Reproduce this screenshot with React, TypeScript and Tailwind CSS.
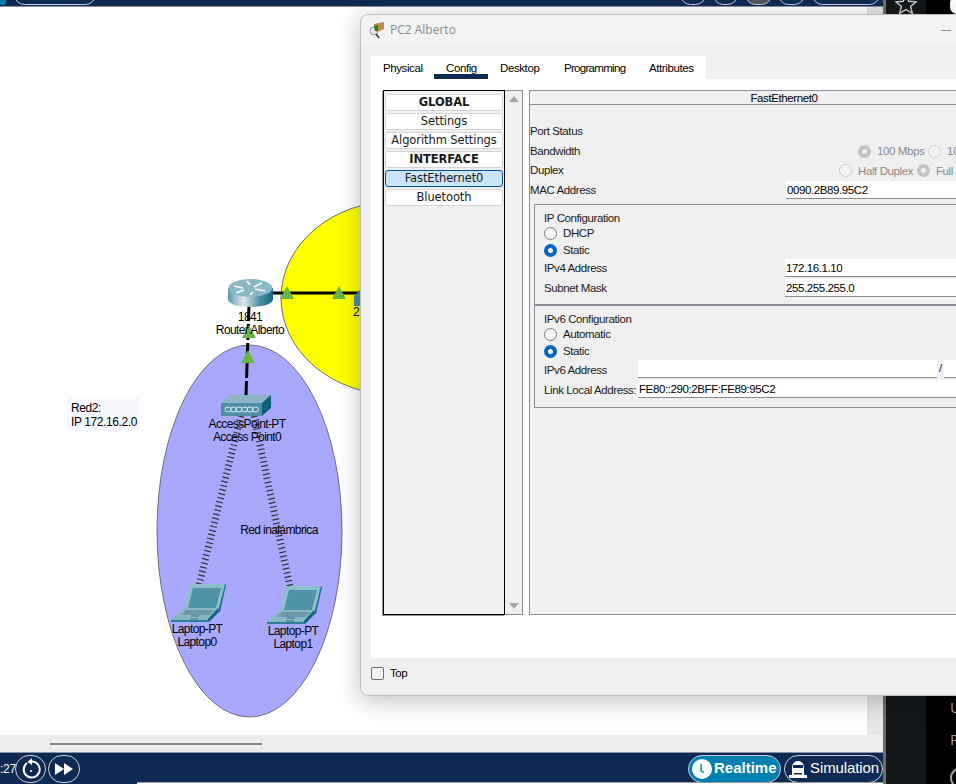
import React from 'react';

const Radio = ({ checked = false, disabled = false }: { checked?: boolean; disabled?: boolean }) => {
  if (checked && disabled) {
    return (
      <span className="flex h-[13px] w-[13px] shrink-0 items-center justify-center rounded-full bg-[#c4c4c4]">
        <span className="h-[5px] w-[5px] rounded-full bg-[#f0f0f0]" />
      </span>
    );
  }
  if (checked) {
    return (
      <span className="flex h-[13px] w-[13px] shrink-0 items-center justify-center rounded-full bg-[#0067c0]">
        <span className="h-[5px] w-[5px] rounded-full bg-white" />
      </span>
    );
  }
  return (
    <span className={disabled
      ? 'h-[13px] w-[13px] shrink-0 rounded-full border border-[#cccccc] bg-[#f4f4f4]'
      : 'h-[13px] w-[13px] shrink-0 rounded-full border border-[#7a7a7a] bg-[#f4f4f4]'} />
  );
};

const Label = ({ text, className = '' }: { text: string; className?: string }) => (
  <span className={`mt-[2px] whitespace-nowrap ${className}`}>{text}</span>
);

const Field = ({ value, className }: { value?: string; className: string }) => (
  <div className={`h-[18px] border-b border-[#8a8a8a] bg-white pl-px leading-[19px] text-black ${className}`}>{value}</div>
);

const MenuItem = ({ label, bold = false, selected = false }: { label: string; bold?: boolean; selected?: boolean }) => (
  <div className={`flex h-[17px] items-center justify-center rounded-[3px] border pt-px font-['DejaVu_Sans',sans-serif] text-[11.500px] tracking-[-0.1px] ${
    selected ? 'border-[#005499] bg-[#cce4f7]' : 'border-[#d4d4d4] bg-white'
  } ${bold ? 'font-bold' : ''}`}>{label}</div>
);

const Triangle = ({ x, y }: { x: number; y: number }) => (
  <polygon points={`${x},${y} ${x + 7},${y + 13} ${x - 7},${y + 13}`} fill="#6ab547" />
);

const Laptop = ({ x, y }: { x: number; y: number }) => (
  <g transform={`translate(${x} ${y})`}>
    <polygon points="19,0 54,0 47,26 47,28 12,28" fill="#8fc0c9" />
    <polygon points="54,0 55,1 49,28 47,28" fill="#14708c" />
    <polygon points="22,4 50,4 45,24 17,24" fill="#4f93a8" />
    <polygon points="14,24 47,24 36,36 0,36" fill="#8ab8c2" />
    <polygon points="15,26 44,26 38,31 10,31" fill="#6a9aa6" />
    <polygon points="47,24 48,28 38,38 36,36" fill="#10657f" />
    <polygon points="0,36 36,36 38,38 0,38" fill="#2b8099" />
    <path d="M20 32h8M19 35h8" stroke="#35707f" strokeWidth="1" />
  </g>
);

const Diagram = () => (
  <svg className="absolute left-0 top-0" width="883" height="784">
    <defs>
      <linearGradient id="routerSide" x1="0" x2="1" y1="0" y2="0">
        <stop offset="0" stopColor="#5a98ad" />
        <stop offset="0.35" stopColor="#dcecf1" />
        <stop offset="0.7" stopColor="#4d8fa5" />
        <stop offset="1" stopColor="#15677f" />
      </linearGradient>
    </defs>
    <ellipse cx="396" cy="298" rx="115" ry="97" fill="#ffff00" stroke="#6e6e6e" />
    <ellipse cx="249.500" cy="531" rx="92.500" ry="186" fill="#a8a8ff" stroke="#6e6e80" />

    <line x1="270" y1="293" x2="362" y2="293" stroke="#000" strokeWidth="3" />
    <line x1="249" y1="305" x2="246" y2="396" stroke="#000" strokeWidth="3" strokeDasharray="16 3" />
    <line x1="241" y1="416" x2="199" y2="585" stroke="#333" strokeWidth="7" strokeDasharray="1.200 3" />
    <line x1="254" y1="416" x2="290" y2="587" stroke="#333" strokeWidth="7" strokeDasharray="1.200 3" />

    <Triangle x={287} y={286} />
    <Triangle x={339} y={286} />
    <Triangle x={249} y={325} />
    <Triangle x={248} y={350} />

    {/* router */}
    <path d="M228 288v11c0 5 10 8 22.500 8s22.500-3 22.500-8v-11z" fill="url(#routerSide)" />
    <ellipse cx="250.500" cy="288" rx="22" ry="9" fill="#8cb7c7" />
    <path d="M234 286l9 2M236 293l8-3M262 283l-8 4M265 291l-10-2M247 281l3 4M253 292l-3 3" stroke="#fff" strokeWidth="1.500" />

    {/* access point */}
    <polygon points="221,403 229,395 271,395 262,403" fill="#8db5c3" />
    <polygon points="262,403 271,395 271,408 262,416" fill="#0f6079" />
    <rect x="221" y="403" width="41" height="13" fill="#4f8fa6" />
    <g fill="none" stroke="#d8eef3" strokeWidth="1">
      <ellipse cx="228" cy="409.500" rx="3" ry="2.500" />
      <ellipse cx="233.500" cy="409.500" rx="3" ry="2.500" />
      <ellipse cx="239" cy="409.500" rx="3" ry="2.500" />
      <ellipse cx="244.500" cy="409.500" rx="3" ry="2.500" />
      <ellipse cx="250" cy="409.500" rx="3" ry="2.500" />
      <ellipse cx="255.500" cy="409.500" rx="3" ry="2.500" />
    </g>

    {/* switch cut off by the window */}
    <polygon points="354,296 360,290 362,290 362,306 354,306" fill="#4f8fa6" />

    <Laptop x={171} y={584} />
    <Laptop x={267} y={586} />
  </svg>
);

const NodeLabel = ({ lines, className }: { lines: string[]; className: string }) => (
  <div className={`absolute -translate-x-1/2 whitespace-nowrap text-center text-[12px] leading-[13px] tracking-[-0.6px] text-black ${className}`}>
    {lines.map((l) => <div key={l}>{l}</div>)}
  </div>
);

const Pill = ({ className }: { className: string }) => (
  <div className={`-mt-[16px] h-[21px] rounded-full border border-[#c8d0dc] ${className}`} />
);

const WindowIcon = () => (
  <svg width="17" height="17" viewBox="0 0 17 17">
    <circle cx="5" cy="9" r="4" fill="#e8e8e8" stroke="#9a9a9a" />
    <line x1="7" y1="12" x2="10" y2="16" stroke="#333" strokeWidth="1.500" />
    <polygon points="5,2 15,0 15,7 8,10 5,7" fill="#b98f4a" />
    <polygon points="5,4 9,3 9,9 6,9" fill="#2d7a34" />
  </svg>
);

const PanelWindow = () => (
  <div className="absolute left-[360px] top-[14px] flex h-[682px] w-[700px] flex-col rounded-[8px] border border-[#bdbdbd] bg-[#f0f0f0] font-['Liberation_Sans',sans-serif] text-[11.500px] tracking-[-0.4px] text-[#1a1a1a] shadow-[0_4px_24px_rgba(0,0,0,0.25)]">
    <div className="flex h-[30px] items-center rounded-t-[8px] bg-[#f3f3f3] pl-[8px] pr-[108px]">
      <WindowIcon />
      <span className="ml-[4px] font-['Open_Sans',sans-serif] text-[12px] tracking-normal text-[#8a8a8a]">PC2 Alberto</span>
      <span className="ml-auto h-px w-[10px] bg-[#8a8a8a]" />
    </div>

    <div className="ml-[10px] mt-[11px] flex h-[602px] flex-col bg-white">
      <div className="flex h-[23px] bg-[#f0f0f0]">
        <div className="relative flex w-[335px] bg-white pl-[12px] pt-[4px] text-black">
          <span className="w-[63px]">Physical</span>
          <span className="w-[54px]">Config</span>
          <span className="w-[64px]">Desktop</span>
          <span className="w-[85px] tracking-[-0.7px]">Programming</span>
          <span>Attributes</span>
          <span className="absolute left-[63px] top-[18px] h-[5px] w-[54px] bg-[#0f2a52]" />
        </div>
      </div>

      <div className="mt-[11px] flex h-[525px] pl-[12px]">
        <div className="flex w-[122px] flex-col gap-[2px] border border-black bg-[#f0f0f0] px-px pt-[3px] shadow-[-1px_1px_0_#8a8f99]">
          <MenuItem label="GLOBAL" bold />
          <MenuItem label="Settings" />
          <MenuItem label="Algorithm Settings" />
          <MenuItem label="INTERFACE" bold />
          <MenuItem label="FastEthernet0" selected />
          <MenuItem label="Bluetooth" />
        </div>
        <div className="flex w-[18px] flex-col items-center justify-between border-y border-r border-[#8a8f99] bg-[#f0f0f0] px-[3px] py-[5px]">
          <span className="h-0 w-0 border-x-[5px] border-b-[6px] border-x-transparent border-b-[#a6a6a6]" />
          <span className="h-0 w-0 border-x-[5px] border-t-[6px] border-x-transparent border-t-[#a6a6a6]" />
        </div>

        <div className="ml-[6px] flex w-[510px] flex-col border border-[#8a8f99] bg-[#f0f0f0]">
          <div className="h-[14px] border-b border-[#8a8f99] text-center leading-[14px] text-black">FastEthernet0</div>

          <div className="pt-[16px]">
            <div className="flex h-[20px] items-center"><Label text="Port Status" /></div>
            <div className="flex h-[20px] items-center">
              <Label text="Bandwidth" className="w-[328px]" />
              <Radio checked disabled />
              <Label text="100 Mbps" className="ml-[6px] w-[51px] text-[#8a8a8a]" />
              <Radio disabled />
              <Label text="10 Mbps" className="ml-[6px] text-[#8a8a8a]" />
            </div>
            <div className="flex h-[19px] items-center">
              <span className="w-[309px]">Duplex</span>
              <Radio disabled />
              <Label text="Half Duplex" className="ml-[6px] w-[59px] text-[#8a8a8a]" />
              <Radio checked disabled />
              <Label text="Full Duplex" className="ml-[6px] text-[#8a8a8a]" />
            </div>
            <div className="flex h-[20px] items-center">
              <Label text="MAC Address" className="w-[256px]" />
              <Field value="0090.2B89.95C2" className="w-[245px]" />
            </div>
          </div>

          <div className="ml-[4px] mt-[4px] w-[500px] border-x border-[#8a8f99]">
            <div className="h-[100px] border-t border-[#8a8f99] pl-[9px] pt-[5px]">
              <div className="flex h-[16px] items-center"><Label text="IP Configuration" /></div>
              <div className="mt-[-1px] flex h-[16px] items-center gap-[6px]"><Radio /><Label text="DHCP" /></div>
              <div className="mt-px flex h-[16px] items-center gap-[6px]"><Radio checked /><Label text="Static" /></div>
              <div className="mt-px flex h-[18px] items-center">
                <Label text="IPv4 Address" className="w-[241px]" />
                <Field value="172.16.1.10" className="w-[240px]" />
              </div>
              <div className="mt-[2px] flex h-[18px] items-center">
                <Label text="Subnet Mask" className="w-[241px]" />
                <Field value="255.255.255.0" className="w-[240px]" />
              </div>
            </div>
            <div className="h-[104px] border-b border-t-2 border-[#8a8f99] pl-[9px] pt-[5px]">
              <div className="flex h-[16px] items-center"><Label text="IPv6 Configuration" /></div>
              <div className="mt-[-1px] flex h-[16px] items-center gap-[6px]"><Radio /><Label text="Automatic" /></div>
              <div className="mt-px flex h-[16px] items-center gap-[6px]"><Radio checked /><Label text="Static" /></div>
              <div className="mt-px flex h-[18px] items-center">
                <Label text="IPv6 Address" className="mt-[4px] w-[94px]" />
                <Field className="w-[299px]" />
                <span className="w-[7px] text-center">/</span>
                <Field className="w-[80px]" />
              </div>
              <div className="mt-[2px] flex h-[18px] items-center">
                <Label text="Link Local Address:" className="mt-[4px] w-[94px]" />
                <Field value="FE80::290:2BFF:FE89:95C2" className="w-[386px]" />
              </div>
            </div>
          </div>
        </div>
      </div>
    </div>

    <div className="flex flex-1 items-center gap-[6px] pb-[6px] pl-[10px] text-black">
      <span className="h-[13px] w-[13px] rounded-[2px] border border-[#6e6e6e] bg-[#f4f4f4]" />
      Top
    </div>
  </div>
);

export default function App() {
  return (
    <div className="relative flex h-[784px] w-[956px] overflow-hidden bg-black font-['Liberation_Sans',sans-serif]">
      <div className="flex w-[883px] shrink-0 flex-col">
        <div className="flex h-[7px] border-b border-[#8a93a3] bg-[#0f2a52]">
          <Pill className="-ml-px w-[7px] border-none bg-[#0080b0]" />
          <Pill className="ml-[8px] w-[82px]" />
          <Pill className="ml-[584px] w-[26px]" />
          <Pill className="ml-[7px] w-[25px]" />
          <Pill className="ml-[7px] w-[27px] bg-[#555555]" />
          <Pill className="ml-[6px] w-[27px]" />
          <Pill className="ml-[7px] w-[68px]" />
        </div>

        <div className="relative flex flex-1">
          <div className="flex-1 bg-white" />
          <div className="w-[16px] bg-[#e6e6e6]" />
        </div>

        <div className="flex h-[17px] items-center bg-[#eeeeee] pl-[50px]">
          <div className="h-[2px] w-[212px] bg-[#8a8a8a]" />
        </div>

        <div className="flex h-[32px] items-center border-t border-[#8a93a3] bg-[#0f2a52] text-white">
          <div className="w-[15px] shrink-0 whitespace-nowrap pr-px text-right text-[12px] tracking-[-0.3px]">:27</div>
          <div className="flex h-[28px] w-[31px] items-center justify-center rounded-full border border-[#c8d0dc]">
            <svg width="22" height="22" viewBox="0 0 22 22" fill="none" stroke="#fff" strokeWidth="2">
              <path d="M7 5a8 8 0 1 0 5-1.500" />
              <path d="M12 0v7L7.500 4z" fill="#fff" stroke="none" />
              <circle cx="11" cy="13" r="1" fill="#fff" stroke="none" />
            </svg>
          </div>
          <div className="ml-[2px] flex h-[28px] w-[32px] items-center justify-center rounded-full border border-[#c8d0dc]">
            <svg width="20" height="14" viewBox="0 0 20 14" fill="#fff">
              <path d="M1 1l9 6-9 6zM10 1l9 6-9 6z" />
            </svg>
          </div>
          <div className="ml-auto flex h-[28px] w-[93px] items-center gap-[2px] rounded-full border border-[#c8d0dc] bg-[#0080b0] pl-[3px] text-[15px] font-bold">
            <svg width="20" height="20" viewBox="0 0 22 22">
              <circle cx="11" cy="11" r="11" fill="#fff" />
              <path d="M10 5v8l3 2" fill="none" stroke="#0080b0" strokeWidth="1.500" />
            </svg>
            Realtime
          </div>
          <div className="ml-[3px] flex h-[28px] w-[99px] items-center gap-[2px] rounded-full border border-[#c8d0dc] pl-[3px] text-[15px] tracking-[-0.1px]">
            <svg width="20" height="20" viewBox="0 0 20 20" fill="#fff">
              <path d="M4 9c0-5 3-7 6-7s6 2 6 7v7h3v3H1v-3h3z" />
              <rect x="5" y="6" width="10" height="3" fill="#0f2a52" />
              <rect x="6" y="14" width="8" height="1.500" fill="#0f2a52" />
            </svg>
            Simulation
          </div>
        </div>
      </div>

      <div className="flex flex-1 border-l-[3px] border-[#6e6e6e]">
        <div className="flex w-[40px] shrink-0 justify-center bg-[#15181b]">
          <svg className="-mt-[6px]" width="22" height="20" viewBox="0 0 24 22" fill="none" stroke="#d0d0d0" strokeWidth="1.500">
            <path d="M12 1l3 7 8 .700-6 5 2 7.500-7-4-7 4 2-7.500-6-5 8-.700z" />
          </svg>
        </div>
        <div className="flex-1 pl-[24px] pt-[696px] font-['Open_Sans',sans-serif] text-[15px] text-[#a0a0a0]">
          <div className="h-[32px]">U</div>
          <div className="h-[39px]">P</div>
          <div className="h-[22px] w-[22px] rounded-full border-2 border-[#a0a0a0]" />
        </div>
        <div className="absolute right-[-8px] top-[-4px] h-[18px] w-[14px] rounded-full bg-white" />
      </div>

      <div className="absolute left-[137px] top-[782px] h-[2px] w-[746px] border-t border-[#9a9a9a] bg-white" />

      <Diagram />
      <div className="absolute left-[67px] top-[397px] h-[34px] w-[72px] whitespace-nowrap bg-[#f8f8ff] p-[4px] text-[12px] leading-[14px] tracking-[-0.4px] text-black">
        <div>Red2:</div>
        <div>IP 172.16.2.0</div>
      </div>
      <NodeLabel lines={['1841', 'Router Alberto']} className="left-[250px] top-[311px]" />
      <NodeLabel lines={['AccessPoint-PT', 'Access Point0']} className="left-[247px] top-[418px]" />
      <NodeLabel lines={['Red inalámbrica']} className="left-[279px] top-[524px]" />
      <NodeLabel lines={['Laptop-PT', 'Laptop0']} className="left-[197px] top-[623px]" />
      <NodeLabel lines={['Laptop-PT', 'Laptop1']} className="left-[293px] top-[625px]" />
      <NodeLabel lines={['2']} className="left-[356px] top-[306px]" />

      <PanelWindow />
    </div>
  );
}
